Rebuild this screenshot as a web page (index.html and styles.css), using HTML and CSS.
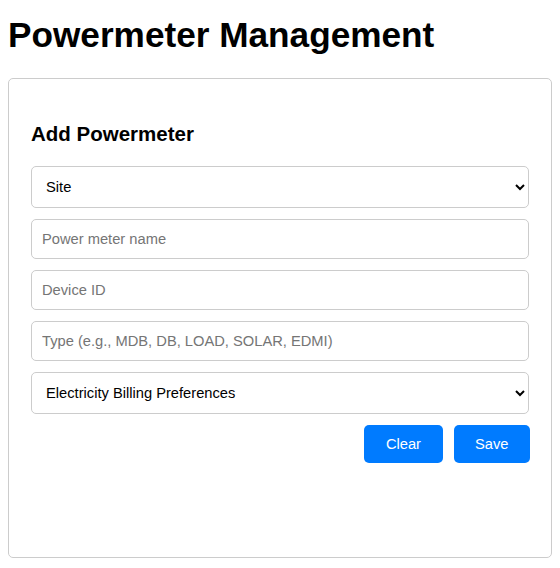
FILE: index.html
```html
<!DOCTYPE html>
<html>
<head>
<meta charset="utf-8">
<title>Powermeter Management</title>
<link rel="stylesheet" href="styles.css">
</head>
<body>
<h1 class="page-title">Powermeter Management</h1>
<div class="card">
  <h2 class="card-title">Add Powermeter</h2>
  <form class="form">
    <select class="field field-select">
      <option>Site</option>
    </select>
    <input class="field" type="text" placeholder="Power meter name">
    <input class="field" type="text" placeholder="Device ID">
    <input class="field" type="text" placeholder="Type (e.g., MDB, DB, LOAD, SOLAR, EDMI)">
    <select class="field field-select">
      <option>Electricity Billing Preferences</option>
    </select>
    <div class="actions">
      <button type="button" class="btn">Clear</button>
      <button type="button" class="btn">Save</button>
    </div>
  </form>
</div>
</body>
</html>
```

FILE: styles.css
```css
* { box-sizing: border-box; }
html, body { background: #fff; }
body {
  margin: 8px;
  font-family: "Liberation Sans", Arial, sans-serif;
  color: #000;
}
.page-title {
  font-size: 35.2px;
  font-weight: bold;
  margin: 7px 0 23px;
  line-height: normal;
}
.card {
  border: 1px solid #ccc;
  border-radius: 5px;
  padding: 20px 22px;
  height: 480px;
}
.card-title {
  font-size: 20.5px;
  font-weight: bold;
  margin: 23px 0 21px;
  line-height: 23px;
}
.form {
  display: flex;
  flex-direction: column;
  gap: 11px;
}
.field {
  display: block;
  width: 100%;
  font-family: "Liberation Sans", Arial, sans-serif;
  font-size: 14.7px;
  padding: 11px 10px;
  border: 1px solid #ccc;
  border-radius: 5px;
  background: #fff;
  color: #000;
  margin: 0;
  height: 40px;
}
.field-select { height: 42px; }
.field::placeholder { color: #757575; }
.actions {
  display: flex;
  justify-content: flex-end;
  gap: 11px;
  margin-right: -1px;
}
.btn {
  font-family: "Liberation Sans", Arial, sans-serif;
  font-size: 14.7px;
  padding: 10px 21.5px;
  border: 0;
  border-radius: 5px;
  background: #007bff;
  color: #fff;
  line-height: normal;
  height: 38px;
}
```
